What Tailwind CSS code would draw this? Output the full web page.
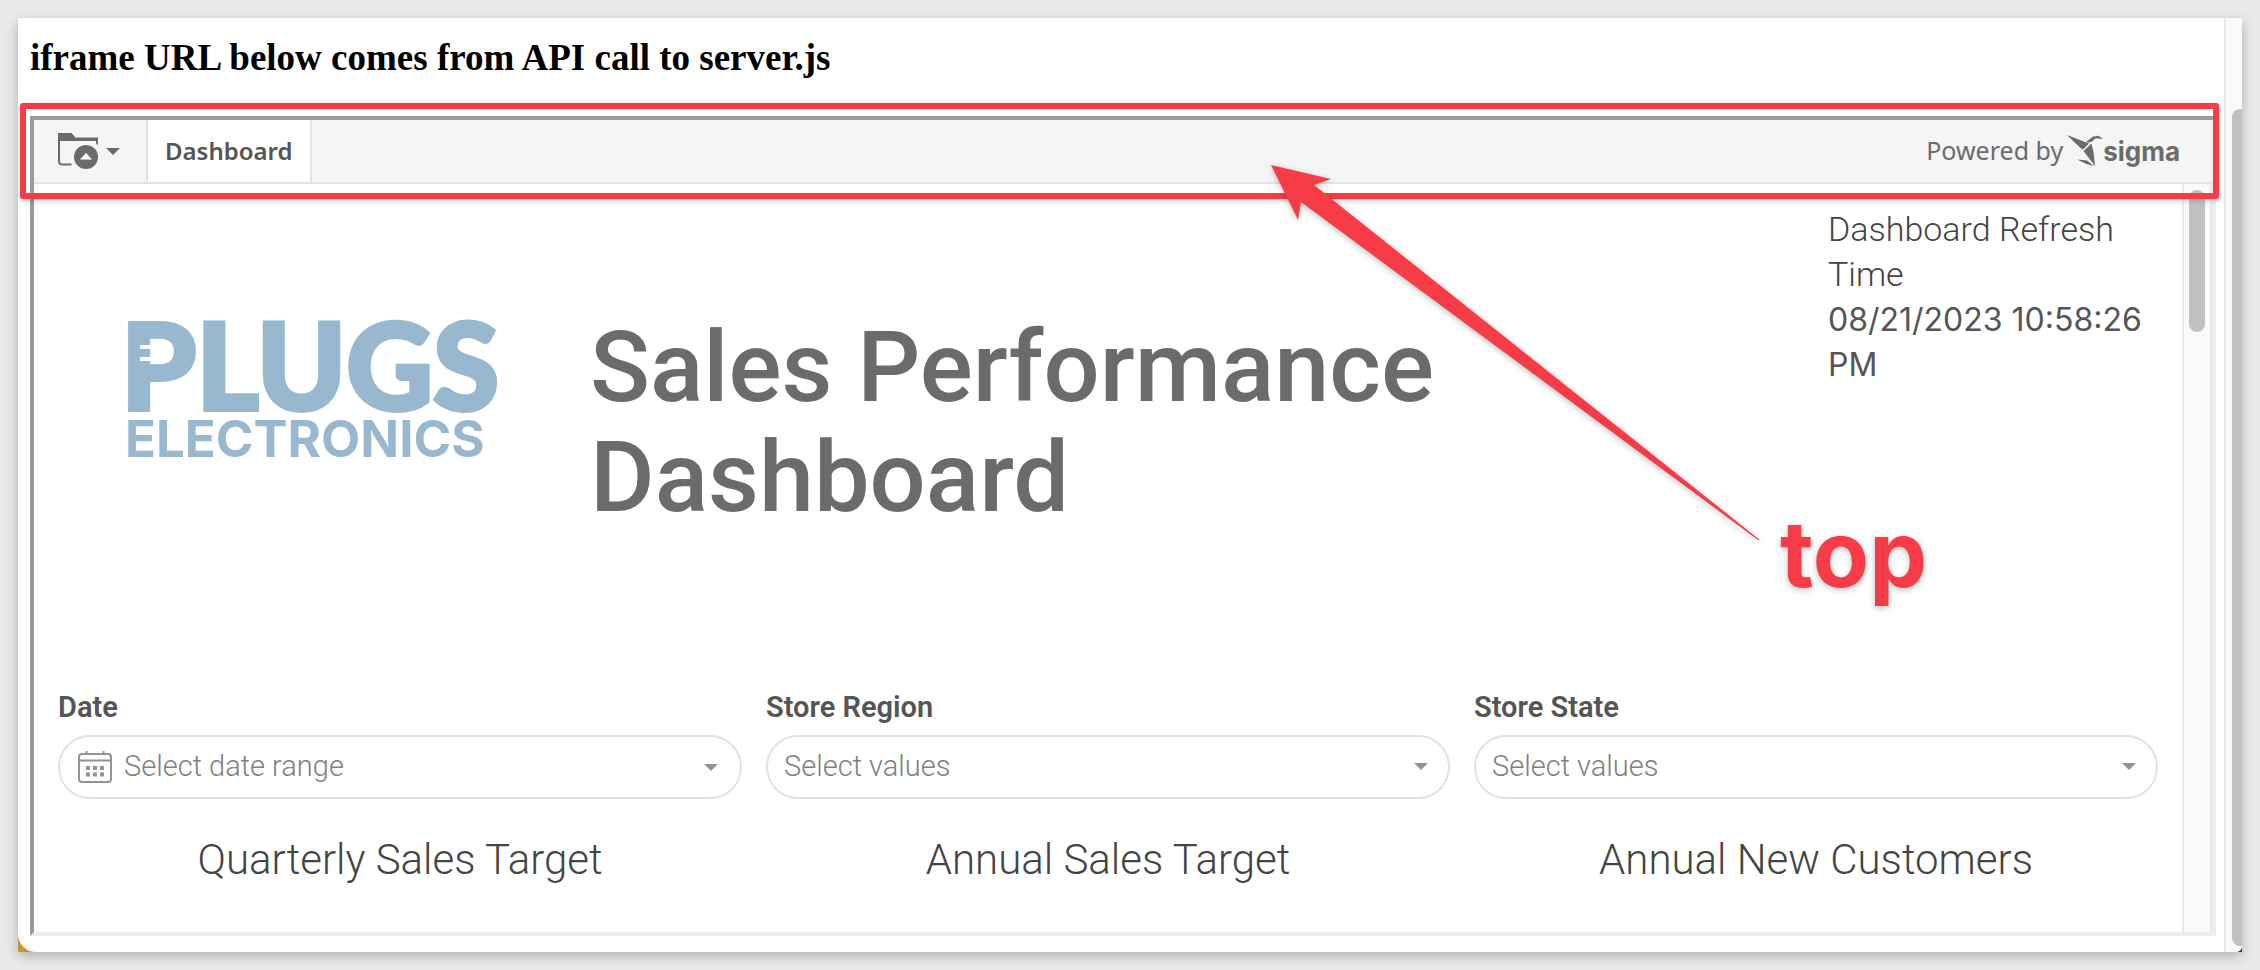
<!DOCTYPE html>
<html lang="en">
<head>
<meta charset="utf-8">
<title>Sales Performance Dashboard</title>
<script src="https://cdn.jsdelivr.net/npm/@tailwindcss/browser@4"></script>
</head>
<body class="flex min-h-screen flex-col bg-[#eaeaea] p-[18px] font-[Roboto,sans-serif] text-[#555]">
<div class="flex flex-1 bg-[linear-gradient(90deg,#c8963a_50%,#333_50%)] shadow-[0_4px_12px_rgba(0,0,0,0.25)]">
  <div class="flex flex-1 overflow-hidden rounded-b-[18px] rounded-br-[6px] bg-white">
    <main class="flex min-w-0 flex-1 flex-col pr-2 pb-4 pl-3">
      <h1 class="pt-[19px] pb-[37px] font-['Liberation_Serif',serif] text-[37px] leading-[42px] font-bold text-black">iframe URL below comes from API call to server.js</h1>

      <!-- Embedded workbook -->
      <section class="relative flex flex-1 flex-col border-4 border-t-[#9a9a9a] border-r-[#eee] border-b-[#eee] border-l-[#9a9a9a]">
        <header class="flex h-16 items-stretch border-b-2 border-[#e2e2e2] bg-[#f5f5f5]">
          <button type="button" aria-label="Folder menu" class="flex w-[114px] items-center gap-2 border-r-2 border-[#e2e2e2] pl-6">
            <svg class="h-9 w-10" viewBox="0 0 40 36" fill="#6b6b6b"><path d="M0 0h13.500l4 4.500H40V12l-2-1.500V8H2v20.500Q2 30.500 4 30.500h9.500v2H4.500Q0 32.500 0 28Z"/><circle cx="28" cy="24" r="12"/><path d="M22 26.500l6-6.500 6 6.500z" fill="#fff"/></svg>
            <svg class="h-[7px] w-[14px]" viewBox="0 0 14 7" fill="#6b6b6b"><path d="M0 0h14L7 7z"/></svg>
          </button>
          <button type="button" class="border-r-2 border-[#e2e2e2] bg-white px-[17px] font-['Noto_Sans',sans-serif] text-[24px] font-semibold">Dashboard</button>
          <a href="#" class="mr-8 ml-auto flex items-center font-['Noto_Sans',sans-serif] text-[25px] text-[#6b6b6b]">Powered by
            <svg class="ml-1 h-8 w-9" viewBox="0 0 36 32" fill="#6b6b6b"><path d="M0 0L22 8.500 16 14.500 13 12.500 3 3Z"/><path d="M19 7L26 1.500 31 1 25 6.500 22 7.500Z"/><path d="M27.500 3.500L31 .5 36 4 31 3.500Z"/><path d="M24.500 8.500L16.500 16 28 31 26.500 17Z"/><path d="M10 24.500L20 25.500 27 31 19.500 29Z"/></svg>
            <span class="font-[Inter,sans-serif] text-[26px] font-bold">sigma</span>
          </a>
        </header>

        <div class="flex flex-1">
          <div class="flex flex-1 flex-col pr-6 pl-6">
            <div class="flex h-[502px] items-start">
              <svg class="mt-[110px] ml-[66px] h-[180px] w-[390px] shrink-0 overflow-visible" viewBox="0 0 390 180" role="img" aria-label="Plugs Electronics" fill="#98b8d0">
                <text x="-3" y="116" stroke="#98b8d0" stroke-width="4" class="font-[Lato,sans-serif] text-[120px] font-black">PLUGS</text>
                <text x="1" y="163" class="font-[Inter,sans-serif] text-[51px] font-bold">ELECTRONICS</text>
                <path d="M16 51h16v4H16zM16 63h16v4H16z" fill="#fff"/>
              </svg>
              <h2 class="mt-[128px] ml-[76px] w-[900px] text-[99px] leading-[110px] font-medium text-[#6b6b6b]">Sales Performance Dashboard</h2>
              <p class="mt-[23px] ml-auto w-[330px] font-[Inter,sans-serif] text-[32px] leading-[45px]"><span class="font-[Roboto,sans-serif] text-[34px] font-light text-[#444]">Dashboard Refresh Time</span><br>08/21/2023 10:58:26 PM</p>
            </div>
            <div class="grid grid-cols-3 gap-6">
              <div class="flex flex-col">
                <label for="date" class="h-[49px] text-[29px] leading-[42px] font-semibold">Date</label>
                <button id="date" type="button" class="flex h-16 items-center rounded-full border-2 border-[#e2e2e2] pr-[22px] pl-[18px] text-[29px] font-light text-[#808080]">
                  <svg class="mr-3 h-8 w-[34px]" viewBox="0 0 34 32" fill="none" stroke="#949494" stroke-width="2"><rect x="1" y="3" width="32" height="28" rx="3"/><path d="M1 9.500h32M8.500 0v4M25.500 0v4"/><path d="M8 17h18M8 23.500h18" stroke-width="4" stroke-dasharray="4 3"/></svg>
                  Select date range
                  <svg class="ml-auto h-[7px] w-[14px]" viewBox="0 0 14 7" fill="#949494"><path d="M0 0h14L7 7z"/></svg>
                </button>
                <h3 class="mt-9 text-center text-[42px] leading-[50px] font-light text-[#444]">Quarterly Sales Target</h3>
              </div>
              <div class="flex flex-col">
                <label for="region" class="h-[49px] text-[29px] leading-[42px] font-semibold">Store Region</label>
                <div class="relative flex">
                  <select id="region" class="h-16 w-full appearance-none rounded-full border-2 border-[#e2e2e2] bg-white px-4 text-[29px] font-light text-[#808080]"><option>Select values</option></select>
                  <svg class="pointer-events-none absolute top-7 right-[22px] h-[7px] w-[14px]" viewBox="0 0 14 7" fill="#949494"><path d="M0 0h14L7 7z"/></svg>
                </div>
                <h3 class="mt-9 text-center text-[42px] leading-[50px] font-light text-[#444]">Annual Sales Target</h3>
              </div>
              <div class="flex flex-col">
                <label for="state" class="h-[49px] text-[29px] leading-[42px] font-semibold">Store State</label>
                <div class="relative flex">
                  <select id="state" class="h-16 w-full appearance-none rounded-full border-2 border-[#e2e2e2] bg-white px-4 text-[29px] font-light text-[#808080]"><option>Select values</option></select>
                  <svg class="pointer-events-none absolute top-7 right-[22px] h-[7px] w-[14px]" viewBox="0 0 14 7" fill="#949494"><path d="M0 0h14L7 7z"/></svg>
                </div>
                <h3 class="mt-9 text-center text-[42px] leading-[50px] font-light text-[#444]">Annual New Customers</h3>
              </div>
            </div>
          </div>
          <div class="w-[30px] border-x-2 border-x-[#e8e8e8] bg-[#fafafa] px-[5px] pt-[6px]">
            <div class="h-[142px] rounded-full bg-[#c1c1c1]"></div>
          </div>
        </div>

        <!-- Annotations -->
        <div class="absolute -top-[17px] -right-[7px] -left-[14px] h-24 rounded-[3px] border-[6px] border-[#f73c47] shadow-[0_2px_5px_rgba(0,0,0,0.2)]"></div>
        <svg class="absolute top-[40px] left-[1230px] h-[390px] w-[510px] drop-shadow-[0_2px_3px_rgba(0,0,0,0.25)]" viewBox="1264 160 510 390" fill="#f73c47"><path d="M1271 165L1331 179 1314 185 1760 540 1758 540 1301 202 1298 220Z"/></svg>
        <span class="absolute top-[379px] left-[1746px] font-[Inter,sans-serif] text-[92px] leading-[110px] font-bold text-[#f73c47] drop-shadow-[0_2px_3px_rgba(0,0,0,0.25)]">top</span>
      </section>
    </main>
    <div class="w-[18px] overflow-hidden border-l-2 border-[#e8e8e8] bg-[#fafafa] pt-[91px] pb-[6px] pl-[6px]">
      <div class="h-full w-4 rounded-full bg-[#c1c1c1]"></div>
    </div>
  </div>
</div>
</body>
</html>
